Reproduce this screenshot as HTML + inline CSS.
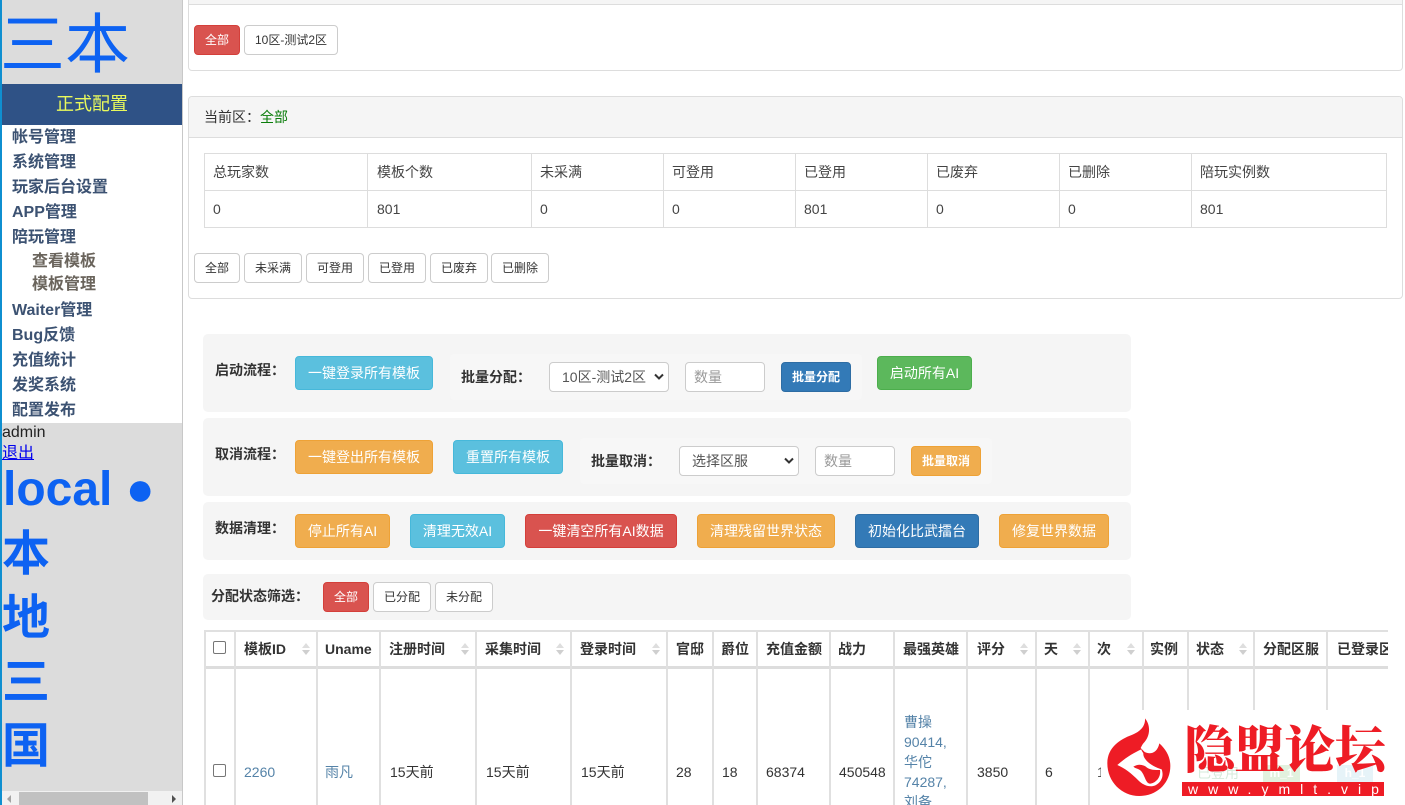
<!DOCTYPE html>
<html><head><meta charset="utf-8"><style>
html,body{margin:0;padding:0;width:1405px;height:805px;overflow:hidden;background:#fff}
body{position:relative;font-family:"Liberation Sans","Noto Sans CJK SC",sans-serif;font-size:14px;color:#333}
.a,.t,.b{position:absolute}
.t{white-space:nowrap}
.b{box-sizing:border-box;border:1px solid #ccc;border-radius:4px;text-align:center;white-space:nowrap;background:#fff;font-size:12px;color:#333}
.l{height:34px;line-height:33px;font-size:14px;color:#fff}
.s{height:30px;line-height:28px}
.i{background:#5bc0de;border-color:#46b8da;color:#fff}
.w{background:#f0ad4e;border-color:#eea236;color:#fff}
.d{background:#d9534f;border-color:#d43f3a;color:#fff}
.p{background:#337ab7;border-color:#2e6da4;color:#fff}
.g{background:#5cb85c;border-color:#4cae4c;color:#fff}
.m{left:12px;font-size:16px;font-weight:bold;color:#3c5272;line-height:25px;height:25px}
.n{left:32px;font-size:16px;font-weight:bold;color:#6a645c;line-height:24px;height:24px}
.big{left:2px;font-size:48px;font-weight:bold;color:#0d62f2;line-height:64px;height:64px}
.gb{background:#f5f5f5;border-radius:5px;left:203px;width:928px}
.lb{font-size:14px;font-weight:bold;color:#333;line-height:20px}
.inp{box-sizing:border-box;border:1px solid #ccc;border-radius:4px;background:#fff;height:30px;width:80px;line-height:28px;padding-left:8px;color:#999;font-size:14px}
.sel{box-sizing:border-box;border:1px solid #ccc;border-radius:4px;background:#fff;height:30px;width:120px;line-height:28px;padding-left:12px;color:#555;font-size:14px;white-space:nowrap}
.v{background:#ddd;width:1px}
.v2{background:#e0e0e0;width:2px}
.h{background:#ddd;height:1px}
.th{font-size:14px;font-weight:bold;color:#333;line-height:20px;top:639px}
.td{font-size:14px;color:#333;line-height:20px;top:762px}
.lk{color:#5583a8}
.cb{box-sizing:border-box;width:13px;height:13px;border:1px solid #767676;border-radius:2px;background:#fff;left:213px}
.ct{font-size:14px;line-height:20px;color:#444}
</style></head><body>

<!-- Sidebar -->
<div class="a" style="left:0;top:0;width:182px;height:805px;background:#dcdcdc"></div>
<div class="a" style="left:182px;top:0;width:1px;height:805px;background:#c8c8c8"></div>
<div class="a" style="left:0;top:0;width:2px;height:805px;background:#0f8fd0"></div>
<div class="t" style="left:0;top:8px;font-size:65px;line-height:74px;color:#0d62f2">三本</div>
<div class="a" style="left:2px;top:84px;width:180px;height:41px;background:#2f5286"></div>
<div class="t" style="left:56px;top:92px;font-size:18px;line-height:24px;color:#e9f95c">正式配置</div>
<div class="a" style="left:2px;top:125px;width:180px;height:298px;background:#fff"></div>
<div class="t m" style="top:125px">帐号管理</div>
<div class="t m" style="top:150px">系统管理</div>
<div class="t m" style="top:175px">玩家后台设置</div>
<div class="t m" style="top:200px">APP管理</div>
<div class="t m" style="top:225px">陪玩管理</div>
<div class="t n" style="top:250px">查看模板</div>
<div class="t n" style="top:273px">模板管理</div>
<div class="t m" style="top:298px">Waiter管理</div>
<div class="t m" style="top:323px">Bug反馈</div>
<div class="t m" style="top:348px">充值统计</div>
<div class="t m" style="top:373px">发奖系统</div>
<div class="t m" style="top:398px">配置发布</div>
<div class="t" style="left:2px;top:423px;font-size:16px;line-height:19px;color:#222">admin</div>
<div class="t" style="left:2px;top:444px;font-size:16px;line-height:20px;color:#0000ee;text-decoration:underline">退出</div>
<div class="t big" style="top:458px;left:3px">local ●</div>
<div class="t big" style="top:523px">本</div>
<div class="t big" style="top:587px">地</div>
<div class="t big" style="top:651px">三</div>
<div class="t big" style="top:715px">国</div>
<!-- sidebar scrollbar -->
<div class="a" style="left:2px;top:791px;width:180px;height:14px;background:#f1f1f1"></div>
<div class="a" style="left:19px;top:792px;width:129px;height:13px;background:#c1c1c1"></div>
<div class="a" style="left:7px;top:795px;width:0;height:0;border:4px solid transparent;border-right-color:#a3a3a3;border-left:0"></div>
<div class="a" style="left:172px;top:795px;width:0;height:0;border:4px solid transparent;border-left-color:#505050;border-right:0"></div>

<!-- Panel 1 -->
<div class="a" style="left:188px;top:-10px;width:1215px;height:81px;box-sizing:border-box;border:1px solid #ddd;border-radius:4px;background:#fff"></div>
<div class="a" style="left:189px;top:0;width:1213px;height:4px;background:#f5f5f5"></div>
<div class="a h" style="left:189px;top:4px;width:1213px"></div>
<div class="b s d" style="left:194px;top:25px;width:46px">全部</div>
<div class="b s" style="left:244px;top:25px;width:94px">10区-测试2区</div>

<!-- Panel 2 -->
<div class="a" style="left:188px;top:96px;width:1215px;height:203px;box-sizing:border-box;border:1px solid #ddd;border-radius:4px;background:#fff"></div>
<div class="a" style="left:189px;top:97px;width:1213px;height:40px;background:#f5f5f5;border-bottom:1px solid #ddd;border-radius:3px 3px 0 0"></div>
<div class="t" style="left:204px;top:107px;font-size:14px;line-height:20px">当前区：<span style="color:#0a7d0a">全部</span></div>
<div class="a h" style="left:204px;top:153px;width:1183px"></div>
<div class="a h" style="left:204px;top:190px;width:1183px"></div>
<div class="a h" style="left:204px;top:227px;width:1183px"></div>
<div class="a v" style="left:204px;top:153px;height:75px"></div>
<div class="a v" style="left:367px;top:153px;height:75px"></div>
<div class="a v" style="left:531px;top:153px;height:75px"></div>
<div class="a v" style="left:663px;top:153px;height:75px"></div>
<div class="a v" style="left:795px;top:153px;height:75px"></div>
<div class="a v" style="left:927px;top:153px;height:75px"></div>
<div class="a v" style="left:1059px;top:153px;height:75px"></div>
<div class="a v" style="left:1191px;top:153px;height:75px"></div>
<div class="a v" style="left:1386px;top:153px;height:75px"></div>
<div class="t ct" style="left:213px;top:162px">总玩家数</div>
<div class="t ct" style="left:377px;top:162px">模板个数</div>
<div class="t ct" style="left:540px;top:162px">未采满</div>
<div class="t ct" style="left:672px;top:162px">可登用</div>
<div class="t ct" style="left:804px;top:162px">已登用</div>
<div class="t ct" style="left:936px;top:162px">已废弃</div>
<div class="t ct" style="left:1068px;top:162px">已删除</div>
<div class="t ct" style="left:1200px;top:162px">陪玩实例数</div>
<div class="t ct" style="left:213px;top:199px">0</div>
<div class="t ct" style="left:377px;top:199px">801</div>
<div class="t ct" style="left:540px;top:199px">0</div>
<div class="t ct" style="left:672px;top:199px">0</div>
<div class="t ct" style="left:804px;top:199px">801</div>
<div class="t ct" style="left:936px;top:199px">0</div>
<div class="t ct" style="left:1068px;top:199px">0</div>
<div class="t ct" style="left:1200px;top:199px">801</div>
<div class="b s" style="left:194px;top:253px;width:46px">全部</div>
<div class="b s" style="left:244px;top:253px;width:58px">未采满</div>
<div class="b s" style="left:306px;top:253px;width:58px">可登用</div>
<div class="b s" style="left:368px;top:253px;width:58px">已登用</div>
<div class="b s" style="left:430px;top:253px;width:58px">已废弃</div>
<div class="b s" style="left:491px;top:253px;width:58px">已删除</div>

<!-- Block 1 -->
<div class="a gb" style="top:334px;height:78px"></div>
<div class="t lb" style="left:215px;top:360px">启动流程：</div>
<div class="b l i" style="left:295px;top:356px;width:138px">一键登录所有模板</div>
<div class="a" style="left:450px;top:354px;width:412px;height:46px;background:#f7f7f7;border-radius:4px"></div>
<div class="t lb" style="left:461px;top:367px">批量分配：</div>
<div class="a sel" style="left:549px;top:362px">10区-测试2区</div>
<svg class="a" style="left:654px;top:373px" width="10" height="8"><path d="M1 1.5L5 5.500L9 1.500" fill="none" stroke="#333" stroke-width="2"/></svg>
<div class="a inp" style="left:685px;top:362px">数量</div>
<div class="b s p" style="left:781px;top:362px;width:70px;font-weight:bold">批量分配</div>
<div class="b l g" style="left:877px;top:356px;width:95px">启动所有AI</div>

<!-- Block 2 -->
<div class="a gb" style="top:418px;height:78px"></div>
<div class="t lb" style="left:215px;top:444px">取消流程：</div>
<div class="b l w" style="left:295px;top:440px;width:138px">一键登出所有模板</div>
<div class="b l i" style="left:453px;top:440px;width:110px">重置所有模板</div>
<div class="a" style="left:580px;top:438px;width:412px;height:46px;background:#f7f7f7;border-radius:4px"></div>
<div class="t lb" style="left:591px;top:451px">批量取消：</div>
<div class="a sel" style="left:679px;top:446px">选择区服</div>
<svg class="a" style="left:784px;top:457px" width="10" height="8"><path d="M1 1.500L5 5.500L9 1.500" fill="none" stroke="#333" stroke-width="2"/></svg>
<div class="a inp" style="left:815px;top:446px">数量</div>
<div class="b s w" style="left:911px;top:446px;width:70px;font-weight:bold">批量取消</div>

<!-- Block 3 -->
<div class="a gb" style="top:502px;height:58px"></div>
<div class="t lb" style="left:215px;top:518px">数据清理：</div>
<div class="b l w" style="left:295px;top:514px;width:95px">停止所有AI</div>
<div class="b l i" style="left:410px;top:514px;width:95px">清理无效AI</div>
<div class="b l d" style="left:525px;top:514px;width:152px">一键清空所有AI数据</div>
<div class="b l w" style="left:697px;top:514px;width:138px">清理残留世界状态</div>
<div class="b l p" style="left:855px;top:514px;width:124px">初始化比武擂台</div>
<div class="b l w" style="left:999px;top:514px;width:110px">修复世界数据</div>

<!-- Block 4 -->
<div class="a gb" style="top:574px;height:46px"></div>
<div class="t lb" style="left:211px;top:586px">分配状态筛选：</div>
<div class="b s d" style="left:323px;top:582px;width:46px">全部</div>
<div class="b s" style="left:373px;top:582px;width:58px">已分配</div>
<div class="b s" style="left:435px;top:582px;width:58px">未分配</div>

<!-- Data table -->
<div class="a" style="left:204px;top:630px;width:1184px;height:175px;overflow:hidden">
  <div class="a" style="left:0;top:0;width:1184px;height:2px;background:#e0e0e0"></div>
  <div class="a" style="left:0;top:36px;width:1184px;height:3px;background:#ddd"></div>
  <div class="a v2" style="left:0;top:0;height:175px"></div>
  <div class="a v2" style="left:30px;top:0;height:175px"></div>
  <div class="a v2" style="left:112px;top:0;height:175px"></div>
  <div class="a v2" style="left:175px;top:0;height:175px"></div>
  <div class="a v2" style="left:271px;top:0;height:175px"></div>
  <div class="a v2" style="left:366px;top:0;height:175px"></div>
  <div class="a v2" style="left:462px;top:0;height:175px"></div>
  <div class="a v2" style="left:508px;top:0;height:175px"></div>
  <div class="a v2" style="left:552px;top:0;height:175px"></div>
  <div class="a v2" style="left:625px;top:0;height:175px"></div>
  <div class="a v2" style="left:689px;top:0;height:175px"></div>
  <div class="a v2" style="left:762px;top:0;height:175px"></div>
  <div class="a v2" style="left:831px;top:0;height:175px"></div>
  <div class="a v2" style="left:884px;top:0;height:175px"></div>
  <div class="a v2" style="left:938px;top:0;height:175px"></div>
  <div class="a v2" style="left:983px;top:0;height:175px"></div>
  <div class="a v2" style="left:1049px;top:0;height:175px"></div>
  <div class="a v2" style="left:1122px;top:0;height:175px"></div>
  <div class="t" style="left:1133px;top:9px;font-size:14px;font-weight:bold;line-height:20px;width:51px;overflow:hidden">已登录区</div>
</div>
<div class="a cb" style="top:641px"></div>
<div class="a cb" style="top:764px"></div>
<div class="t th" style="left:244px">模板ID</div>
<div class="t th" style="left:325px">Uname</div>
<div class="t th" style="left:389px">注册时间</div>
<div class="t th" style="left:485px">采集时间</div>
<div class="t th" style="left:580px">登录时间</div>
<div class="t th" style="left:676px">官邸</div>
<div class="t th" style="left:721px">爵位</div>
<div class="t th" style="left:766px">充值金额</div>
<div class="t th" style="left:838px">战力</div>
<div class="t th" style="left:903px">最强英雄</div>
<div class="t th" style="left:977px">评分</div>
<div class="t th" style="left:1044px">天</div>
<div class="t th" style="left:1097px">次</div>
<div class="t th" style="left:1150px">实例</div>
<div class="t th" style="left:1196px">状态</div>
<div class="t th" style="left:1263px">分配区服</div>
<svg class="a" style="left:0;top:0;pointer-events:none" width="1405" height="805">
  <g fill="#dedede">
  <path d="M302 648l4-5 4 5zM461 648l4-5 4 5zM556 648l4-5 4 5zM652 648l4-5 4 5zM1020 648l4-5 4 5zM1073 648l4-5 4 5zM1127 648l4-5 4 5zM1239 648l4-5 4 5z"/>
  </g>
  <g fill="#cfcfcf">
  <path d="M302 650l4 5 4-5zM461 650l4 5 4-5zM556 650l4 5 4-5zM652 650l4 5 4-5zM1020 650l4 5 4-5zM1073 650l4 5 4-5zM1127 650l4 5 4-5zM1239 650l4 5 4-5z"/>
  </g>
</svg>
<div class="t td lk" style="left:244px">2260</div>
<div class="t td lk" style="left:325px">雨凡</div>
<div class="t td" style="left:390px">15天前</div>
<div class="t td" style="left:486px">15天前</div>
<div class="t td" style="left:581px">15天前</div>
<div class="t td" style="left:676px">28</div>
<div class="t td" style="left:722px">18</div>
<div class="t td" style="left:766px">68374</div>
<div class="t td" style="left:839px">450548</div>
<div class="t td lk" style="left:904px;top:712px">曹操</div>
<div class="t td lk" style="left:904px;top:732px">90414,</div>
<div class="t td lk" style="left:904px;top:752px">华佗</div>
<div class="t td lk" style="left:904px;top:772px">74287,</div>
<div class="t td lk" style="left:904px;top:792px">刘备</div>
<div class="t td" style="left:977px">3850</div>
<div class="t td" style="left:1045px">6</div>
<div class="t td" style="left:1097px;color:#555">1</div>

<!-- Watermark -->
<div class="a" style="left:1101px;top:710px;width:287px;height:95px;background:#fff"></div>
<div class="t" style="left:1197px;top:763px;font-size:14px;line-height:20px;color:#d6eadb">已登用</div>
<div class="a" style="left:1263px;top:765px;width:37px;height:17px;background:#e2f1de;color:#fff;font-size:12px;font-weight:bold;text-align:center;line-height:17px">m_1</div>
<div class="a" style="left:1337px;top:765px;width:36px;height:17px;background:#e6f3f8;color:#fff;font-size:12px;font-weight:bold;text-align:center;line-height:17px">h_1</div>
<svg class="a" style="left:1100px;top:710px" width="90" height="95" viewBox="0 0 270 285">
  <path fill="#ee1c25" d="M135 25C152 45 152 78 130 100C126 105 124 110 122 114L134 126C150 134 172 130 178 100C198 118 211 140 211 168C211 220 170 258 118 258C65 258 22 215 22 160C22 112 60 88 95 75C118 66 137 50 135 25Z"/>
  <path fill="#fff" d="M52 165C80 140 102 128 124 118C124 122 128 126 130 130C128 145 150 168 185 178C192 198 185 216 166 226C150 233 130 226 115 211C95 191 75 175 52 165Z"/>
  <path fill="#ee1c25" d="M100 170C115 160 130 164 140 172C150 180 165 180 180 180C183 197 173 216 152 221C136 222 136 196 122 182C116 176 106 176 100 170Z"/>
</svg>
<div class="t" style="left:1184px;top:712px;font-family:'Noto Serif CJK SC','Liberation Serif',serif;font-size:51px;font-weight:900;line-height:68px;color:#ee1c25;letter-spacing:-0.800px">隐盟论坛</div>
<div class="a" style="left:1182px;top:782px;width:202px;height:14px;background:#ee1c25"></div>
<div class="t" style="left:1188px;top:781px;font-size:14px;line-height:16px;color:#fff;letter-spacing:10px">www.ymlt.vip</div>
</body></html>
